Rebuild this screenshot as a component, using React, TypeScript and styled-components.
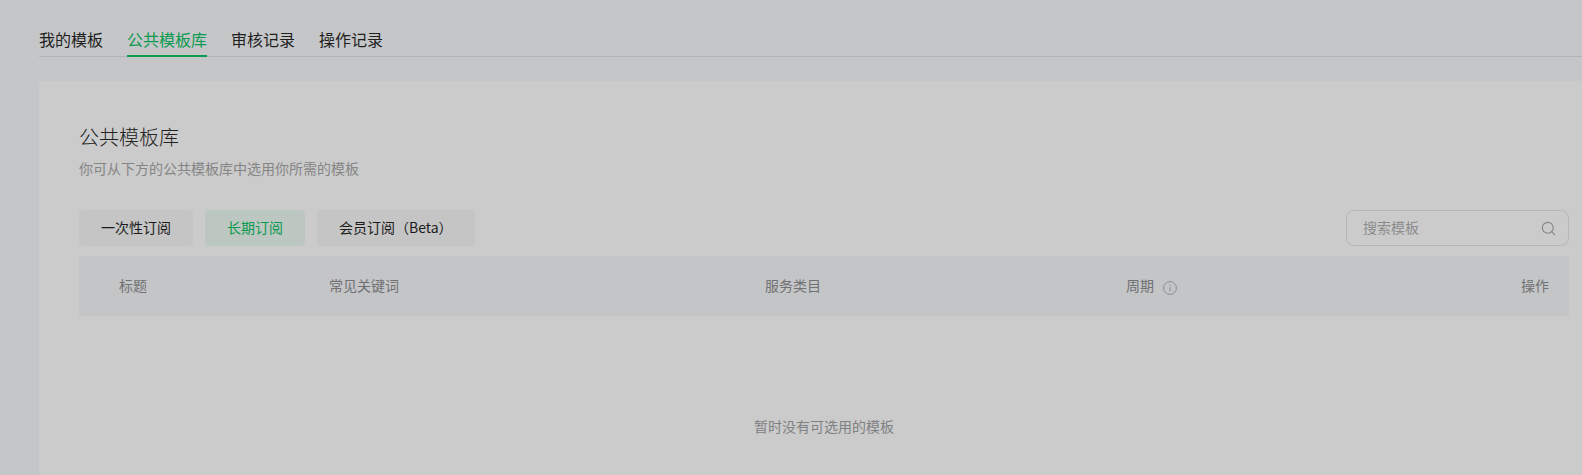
import React from "react";
import styled, { createGlobalStyle } from "styled-components";

const GlobalStyle = createGlobalStyle`
  html, body {
    margin: 0;
    padding: 0;
    height: 475px;
    overflow: hidden;
    background: #c5c6c8;
    font-family: "Noto Sans CJK SC", "Liberation Sans", sans-serif;
  }
`;

const Page = styled.div`
  box-sizing: border-box;
  width: 1582px;
  height: 475px;
  overflow: hidden;
  padding: 26px 0 0 39px;
  background: #c5c6c8;
`;

const TabBar = styled.div`
  display: flex;
  gap: 24px;
  height: 30px;
  border-bottom: 1px solid #b2b3b5;
`;

const Tab = styled.div<{ $active?: boolean }>`
  height: 29px;
  line-height: 26px;
  font-size: 16px;
  color: ${(p) => (p.$active ? "#0a9a50" : "#1f1f1f")};
  border-bottom: ${(p) => (p.$active ? "2px solid #0a9c50" : "none")};
`;

const Card = styled.div`
  box-sizing: border-box;
  width: 1570px;
  height: 420px;
  margin-top: 24px;
  padding: 40px 0 0 40px;
  background: #cbcbcb;
  border-radius: 4px 0 0 0;
`;

const Title = styled.h2`
  margin: 0;
  font-size: 20px;
  font-weight: 300;
  line-height: 32px;
  color: #222222;
`;

const Subtitle = styled.p`
  margin: 4px 0 0;
  font-size: 14px;
  line-height: 22px;
  color: #858585;
`;

const Toolbar = styled.div`
  display: flex;
  justify-content: space-between;
  width: 1490px;
  margin-top: 31px;
`;

const Filters = styled.div`
  display: flex;
  gap: 12px;
`;

const FilterButton = styled.div<{ $active?: boolean }>`
  height: 36px;
  padding: 0 22px;
  line-height: 34px;
  font-size: 14px;
  border-radius: 4px;
  color: ${(p) => (p.$active ? "#0a9a50" : "#1b1b1b")};
  background: ${(p) => (p.$active ? "#bbc7c0" : "#c4c5c4")};
`;

const SearchBox = styled.div`
  box-sizing: border-box;
  width: 223px;
  height: 36px;
  padding: 0 12px 0 16px;
  display: flex;
  align-items: center;
  justify-content: space-between;
  font-size: 14px;
  color: #8c8c8c;
  border: 1px solid #b5b6b6;
  border-radius: 8px;
`;

const SearchLabel = styled.span`
  line-height: 20px;
  margin-top: -2px;
`;

const TableHead = styled.div`
  box-sizing: border-box;
  display: grid;
  grid-template-columns: 210px 436px 361px 1fr;
  align-items: center;
  width: 1490px;
  height: 60px;
  margin-top: 10px;
  padding: 0 20px 2px 40px;
  background: #c4c5c7;
  font-size: 14px;
  color: #707173;
`;

const HeadCell = styled.div`
  display: flex;
  align-items: center;
`;

const HeadSplit = styled.div`
  display: flex;
  justify-content: space-between;
  align-items: center;
`;

const PeriodCell = styled(HeadCell)`
  gap: 9px;
`;

const InfoMark = styled.svg`
  margin-top: 6px;
`;

const Empty = styled.div`
  width: 1490px;
  margin-top: 99px;
  text-align: center;
  font-size: 14px;
  line-height: 22px;
  color: #7f8082;
`;

const InfoIcon = () => (
  <InfoMark width="14" height="14" viewBox="0 0 14 14" fill="none" stroke="#8a8b8d">
    <circle cx="7" cy="7" r="6.4" />
    <path d="M7 6.2v4" />
    <path d="M7 3.6v1.2" />
  </InfoMark>
);

const SearchIcon = () => (
  <svg width="15" height="15" viewBox="0 0 16 16" fill="none" stroke="#858585" strokeWidth="1.2">
    <circle cx="7.2" cy="7.2" r="5.8" />
    <path d="M11.4 11.4l3.6 3.6" />
  </svg>
);

export default function App() {
  return (
    <Page>
      <GlobalStyle />
      <TabBar>
        <Tab>我的模板</Tab>
        <Tab $active>公共模板库</Tab>
        <Tab>审核记录</Tab>
        <Tab>操作记录</Tab>
      </TabBar>
      <Card>
        <Title>公共模板库</Title>
        <Subtitle>你可从下方的公共模板库中选用你所需的模板</Subtitle>
        <Toolbar>
          <Filters>
            <FilterButton>一次性订阅</FilterButton>
            <FilterButton $active>长期订阅</FilterButton>
            <FilterButton>会员订阅（Beta）</FilterButton>
          </Filters>
          <SearchBox>
            <SearchLabel>搜索模板</SearchLabel>
            <SearchIcon />
          </SearchBox>
        </Toolbar>
        <TableHead>
          <HeadCell>标题</HeadCell>
          <HeadCell>常见关键词</HeadCell>
          <HeadCell>服务类目</HeadCell>
          <HeadSplit>
            <PeriodCell>
              周期
              <InfoIcon />
            </PeriodCell>
            <HeadCell>操作</HeadCell>
          </HeadSplit>
        </TableHead>
        <Empty>暂时没有可选用的模板</Empty>
      </Card>
    </Page>
  );
}
